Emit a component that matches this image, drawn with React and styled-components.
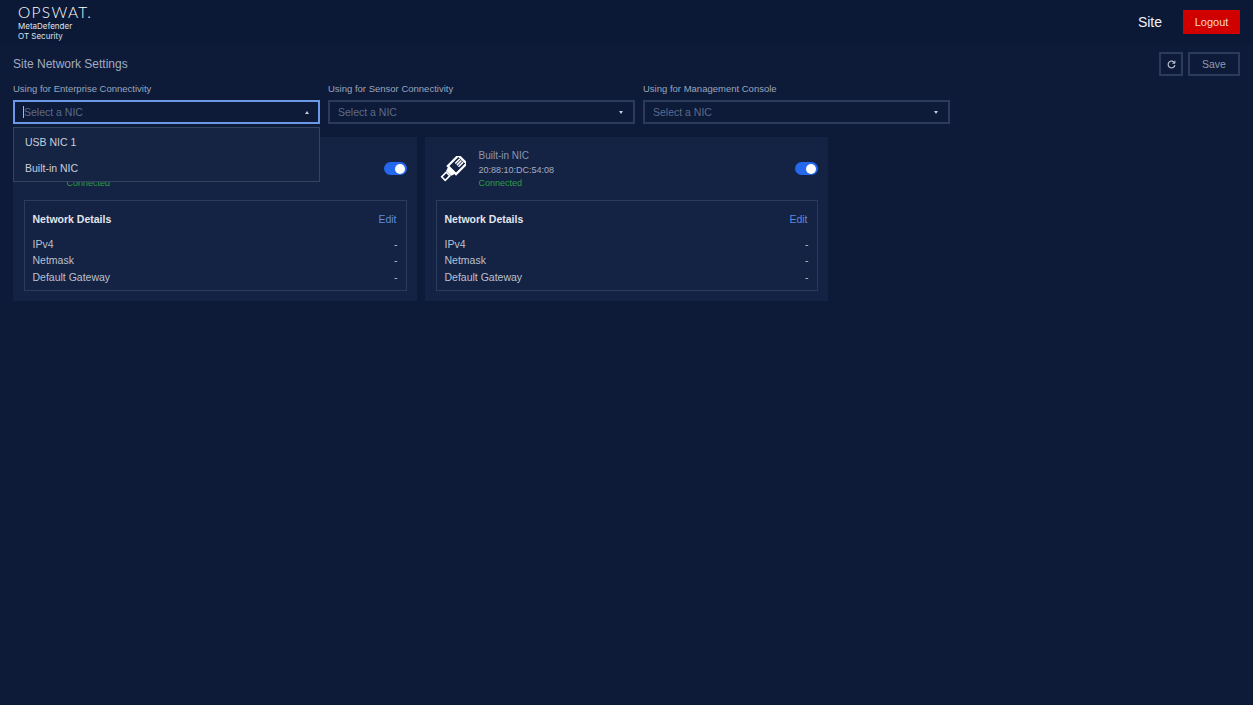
import React from "react";
import styled, { createGlobalStyle } from "styled-components";

const Global = createGlobalStyle`
  html, body { margin: 0; padding: 0; background: #0d1a38; }
  body { font-family: "Liberation Sans", Arial, sans-serif; }
  * { box-sizing: border-box; }
`;
const Page = styled.div`min-height: 705px; background: #0d1a38; color: #c8cfdc;`;
const Header = styled.header`
  height: 44px; background: #0c1936; display: flex; align-items: center;
  justify-content: space-between; padding: 0 13px 0 18px;
`;
const Logo = styled.div`display: flex; flex-direction: column; padding-top: 2px;`;
const LogoMark = styled.div`
  font-family: Lato, sans-serif; font-weight: 300; font-size: 15.5px; line-height: 14px;
  letter-spacing: 1.3px; color: #fff; margin-bottom: 3px;
`;
const LogoLine = styled.div`
  font-family: Inter, sans-serif; font-size: 8px; line-height: 9.5px; color: #dfe3ea;
`;
const HeaderRight = styled.div`display: flex; align-items: center; gap: 21px;`;
const SiteLabel = styled.span`font-size: 14px; color: #eef1f6;`;
const LogoutButton = styled.button`
  width: 57px; height: 24px; border: 0; background: #d00000; color: #f4d5d5;
  font: 11px "Liberation Sans", sans-serif; padding: 0;
`;
const Content = styled.main`padding: 8px 13px 0;`;
const TitleRow = styled.div`display: flex; align-items: center; justify-content: space-between; height: 24px;`;
const Title = styled.h1`margin: 0; font-size: 12px; font-weight: 400; color: #a1acc2;`;
const Actions = styled.div`display: flex; gap: 5px;`;
const OutlineButton = styled.button`
  height: 24px; width: ${p => p.$w}px; background: transparent; border: 2px solid #2c3b5c;
  color: #8f9bb3; font: 10.5px "Liberation Sans", sans-serif; padding: 0;
  display: flex; align-items: center; justify-content: center;
`;
const Selectors = styled.div`display: flex; gap: 8px; margin-top: 7px; position: relative; z-index: 2;`;
const Field = styled.div`width: ${p => p.$w}px; position: relative;`;
const FieldLabel = styled.div`font-size: 9.5px; line-height: 12px; color: #9aa6bd; margin-bottom: 5px;`;
const SelectBox = styled.div`
  height: 24px; border: 2px solid ${p => (p.$open ? "#6c98e8" : "#2c3b5c")};
  display: flex; align-items: center; justify-content: space-between;
  padding: 0 ${p => (p.$open ? "9px" : "10px")} 0 ${p => (p.$open ? "8px" : "8px")};
  font-size: 10.5px; color: #5d6c8a;
`;
const Placeholder = styled.span`
  border-left: ${p => (p.$open ? "1px solid #aab6cc" : "0")};
  line-height: 12px;
`;
const Caret = styled.span`
  width: 0; height: 0; border-left: 2.5px solid transparent; border-right: 2.5px solid transparent;
  ${p => (p.$up ? "border-bottom: 3px solid #c4ccd9;" : "border-top: 3px solid #c4ccd9;")}
`;
const Dropdown = styled.div`
  position: absolute; left: 0; right: 0; top: 44px; height: 55px;
  background: #162444; border: 1px solid #34435f; padding-top: 1px;
`;
const Option = styled.div`height: 26px; padding: 0 11px; display: flex; align-items: center; font-size: 10.5px; color: #c8cfdc;`;
const Cards = styled.div`display: flex; gap: 8px; margin-top: 13px;`;
const Card = styled.section`
  width: ${p => p.$w}px; height: 164px; background: #142244; padding: 0 10.5px;
  display: flex; flex-direction: column;
`;
const CardTop = styled.div`height: 63px; display: flex; align-items: center; gap: 13px; padding-left: 4px;`;
const NicIcon = styled.svg`width: 26px; height: 26px; flex: none;`;
const NicInfo = styled.div`flex: 1; display: flex; flex-direction: column; padding-top: 1px;`;
const NicName = styled.div`font-size: 10px; line-height: 13px; color: #8a97b0;`;
const NicMac = styled.div`font-size: 9px; line-height: 14px; margin-top: 1px; color: #a5aec0;`;
const NicStatus = styled.div`font-size: 9px; line-height: 11px; margin-top: 1px; color: #2f9e44;`;
const Toggle = styled.div`
  width: 23px; height: 13px; border-radius: 7px; background: #2468ee; position: relative; flex: none;
  &::after { content: ""; position: absolute; right: 1.5px; top: 1.5px; width: 10px; height: 10px; border-radius: 50%; background: #fff; }
`;
const Details = styled.div`border: 1px solid #2c3b5c; height: 91px; padding: 0 8px;`;
const DetailsHead = styled.div`
  display: flex; justify-content: space-between; align-items: center; height: 35px; padding-right: 1px;
`;
const DetailsTitle = styled.div`font-size: 10.5px; font-weight: 700; color: #e2e6ed;`;
const EditLink = styled.a`font-size: 10.5px; color: #5f8ad8;`;
const DetailRow = styled.div`
  display: flex; justify-content: space-between; align-items: center; height: 16.3px; font-size: 10.5px; color: #b9c1d0;
`;

const Plug = () => (
  <NicIcon viewBox="0 0 26 26">
    <g transform="rotate(45 13 13)" fill="none" stroke="#fff">
      <rect x="7.2" y="-0.5" width="11.6" height="15" strokeWidth="2.2" fill="#142244" />
      <path d="M10.7 1v6.5M13 1v6.5M15.3 1v6.5" strokeWidth="1.5" />
      <path d="M8.5 14.5h9l-1.2 4h-6.6z" fill="#fff" strokeWidth="1" />
      <rect x="10.5" y="20" width="5" height="6.5" strokeWidth="1.6" />
    </g>
  </NicIcon>
);

const Refresh = () => (
  <svg width="9" height="9" viewBox="0 0 10 10" fill="none" stroke="#c4ccd9" strokeWidth="1.2">
    <path d="M8.4 3.2A3.8 3.8 0 1 0 8.8 5.6" />
    <path d="M8.8 0.8v2.8H6" strokeWidth="1.1" />
  </svg>
);

const fields = [
  { label: "Using for Enterprise Connectivity", open: true, w: 307 },
  { label: "Using for Sensor Connectivity", w: 307 },
  { label: "Using for Management Console", w: 307 },
];

const NicCard = ({ w, name, mac }) => (
  <Card $w={w}>
    <CardTop>
      <Plug />
      <NicInfo>
        <NicName>{name}</NicName>
        <NicMac>{mac}</NicMac>
        <NicStatus>Connected</NicStatus>
      </NicInfo>
      <Toggle />
    </CardTop>
    <Details>
      <DetailsHead>
        <DetailsTitle>Network Details</DetailsTitle>
        <EditLink>Edit</EditLink>
      </DetailsHead>
      {["IPv4", "Netmask", "Default Gateway"].map(k => (
        <DetailRow key={k}><span>{k}</span><span>-</span></DetailRow>
      ))}
    </Details>
  </Card>
);

export default function App() {
  return (
    <Page>
      <Global />
      <Header>
        <Logo>
          <LogoMark>OPSWAT.</LogoMark>
          <LogoLine>MetaDefender</LogoLine>
          <LogoLine>OT Security</LogoLine>
        </Logo>
        <HeaderRight>
          <SiteLabel>Site</SiteLabel>
          <LogoutButton>Logout</LogoutButton>
        </HeaderRight>
      </Header>
      <Content>
        <TitleRow>
          <Title>Site Network Settings</Title>
          <Actions>
            <OutlineButton $w={24}><Refresh /></OutlineButton>
            <OutlineButton $w={52}>Save</OutlineButton>
          </Actions>
        </TitleRow>
        <Selectors>
          {fields.map(f => (
            <Field key={f.label} $w={f.w}>
              <FieldLabel>{f.label}</FieldLabel>
              <SelectBox $open={f.open}>
                <Placeholder $open={f.open}>Select a NIC</Placeholder>
                <Caret $up={f.open} />
              </SelectBox>
              {f.open && (
                <Dropdown>
                  <Option>USB NIC 1</Option>
                  <Option>Built-in NIC</Option>
                </Dropdown>
              )}
            </Field>
          ))}
        </Selectors>
        <Cards>
          <NicCard w={404} name="USB NIC 1" mac="00:00:00:00:00:00" />
          <NicCard w={403} name="Built-in NIC" mac="20:88:10:DC:54:08" />
        </Cards>
      </Content>
    </Page>
  );
}
